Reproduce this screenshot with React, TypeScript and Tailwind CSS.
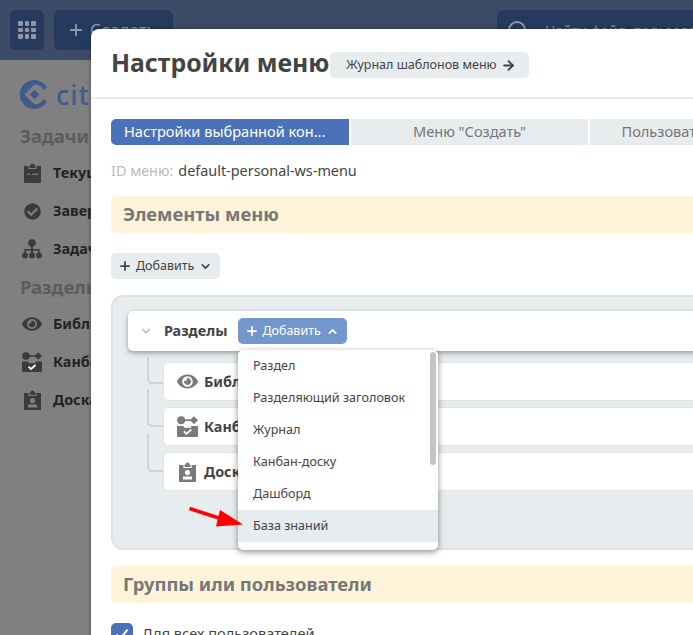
import { ArrowRight, ChevronDown, ChevronUp, Plus } from 'lucide-react';
import { FaCheckCircle, FaEye } from 'react-icons/fa';

type IconProps = { className?: string };

function KanbanIcon({ className }: IconProps) {
  return (
    <svg viewBox="0 0 20 20" className={className} fill="currentColor">
      <circle cx="4" cy="4" r="3.8" />
      <path d="M12.4 4 L16.2 0.2 L20 4 L16.2 7.8 Z" />
      <rect x="6" y="3.2" width="8" height="1.6" />
      <path d="M0 9.5 H6.5 V11.2 H13.5 V9.5 H20 V19 a1 1 0 0 1 -1 1 H1 a1 1 0 0 1 -1 -1 Z" />
      <path d="M6.6 14.6 L9 17 L13.6 13" fill="none" stroke="white" strokeWidth="1.7" />
    </svg>
  );
}

function TasksIcon({ className }: IconProps) {
  return (
    <svg viewBox="0 0 17 20" className={className} fill="currentColor">
      <path d="M5.5 2.5 H6.5 a2 2 0 0 1 4 0 H11.5 V5 H5.5 Z" />
      <path d="M1 3 H4.4 V6 H12.6 V3 H16 a1 1 0 0 1 1 1 V19 a1 1 0 0 1 -1 1 H1 a1 1 0 0 1 -1 -1 V4 a1 1 0 0 1 1 -1 Z" />
      <rect x="3" y="10.5" width="3" height="1.4" fill="#777" />
      <rect x="8" y="10.5" width="6" height="1.4" fill="#777" />
    </svg>
  );
}

function BoardIcon({ className }: IconProps) {
  return (
    <svg viewBox="0 0 17 20" className={className} fill="currentColor">
      <path d="M5.5 2.5 H6.5 a2 2 0 0 1 4 0 H11.5 V5 H5.5 Z" />
      <path
        fillRule="evenodd"
        d="M0 3 H4.4 V6 H12.6 V3 H17 V20 H0 Z M8.5 8 a2.6 2.6 0 1 0 0.01 0 Z M4 14.6 V17.4 H13 V14.6 Z"
      />
    </svg>
  );
}

function SitemapIcon({ className }: IconProps) {
  return (
    <svg viewBox="0 0 20 20" className={className} fill="currentColor">
      <circle cx="10" cy="4" r="3.8" />
      <circle cx="3" cy="16.6" r="3" />
      <circle cx="10" cy="16.6" r="3" />
      <circle cx="17" cy="16.6" r="3" />
      <path d="M9 6 H11 V10 H17.6 V15 H16 V11.6 H11 V15 H9 V11.6 H4 V15 H2.4 V10 H9 Z" />
    </svg>
  );
}

function Logo() {
  return (
    <svg viewBox="0 0 29 29" className="h-[29px] w-[29px] text-[#3f5a8c]" fill="currentColor">
      <path d="M27 7.5 A14.5 14.5 0 1 0 27 21.5 L23.4 19 A10 10 0 0 1 14.5 24.4 L4.6 14.5 L14.5 4.6 A10 10 0 0 1 23.4 10 Z" />
      <path d="M14.5 9.8 L19.2 14.5 L14.5 19.2 L9.8 14.5 Z" />
    </svg>
  );
}

function SideItem({ icon, label }: { icon: React.ReactNode; label: string }) {
  return (
    <div className="flex h-[38px] items-center">
      <div className="flex w-[32px] justify-center text-[#3b3b3b]">{icon}</div>
      <span className="ml-[5px] text-[14.4px] font-bold whitespace-nowrap text-[#232323]">{label}</span>
    </div>
  );
}

function TreeRow({ icon, label, first }: { icon: React.ReactNode; label: string; first?: boolean }) {
  return (
    <div className="relative flex h-[39px] items-center rounded-[5px] border border-[#dfe4e7] bg-white pl-[12px]">
      <div
        className={`absolute left-[-17px] w-[16px] rounded-bl-[5px] border-b-2 border-l-2 border-[#cfd3d3] ${
          first ? 'top-[-6px] h-[27px]' : 'top-[-19px] h-[38px]'
        }`}
      />
      <div className="flex w-[22px] justify-center text-[#7a7a7a]">{icon}</div>
      <span className="ml-[6px] text-[14.4px] font-bold whitespace-nowrap text-[#444]">{label}</span>
    </div>
  );
}

const menuItems = ['Раздел', 'Разделяющий заголовок', 'Журнал', 'Канбан-доску', 'Дашборд', 'База знаний'];

export default function App() {
  return (
    <div className="relative h-[635px] w-[693px] overflow-hidden bg-[#808080] font-['Noto_Sans','Open_Sans',sans-serif]">
      {/* Page behind the dialog */}
      <div className="flex h-[60px] items-center bg-[#3c4c68] pl-[10px]">
        <div className="flex h-[40px] w-[34px] shrink-0 items-center justify-center rounded-[6px] bg-[#263a5e]">
          <div className="grid grid-cols-3 gap-[2px]">
            {Array.from({ length: 9 }).map((_, i) => (
              <div key={i} className="h-[4.5px] w-[4.5px] rounded-[1px] bg-[#8f97a6]" />
            ))}
          </div>
        </div>
        <div className="ml-[10px] flex h-[40px] w-[119px] shrink-0 items-center rounded-[6px] bg-[#263a5e] pl-[13px] text-[#8f97a6]">
          <Plus size={18} strokeWidth={2.5} />
          <span className="ml-[5px] text-[17px]">Создать</span>
        </div>
        <div className="ml-[324px] flex h-[40px] w-[220px] shrink-0 items-center rounded-tl-[6px] rounded-bl-[6px] bg-[#263a5e] pl-[11px] text-[#8f97a6]">
          <div className="h-[18px] w-[18px] shrink-0 rounded-full border-2 border-[#8f97a6]" />
          <span className="ml-[19px] text-[14px] whitespace-nowrap">Найти файл, пользователя</span>
        </div>
      </div>
      <div className="pt-[19px] pl-[20px]">
        <div className="flex h-[30px] items-center">
          <Logo />
          <span className="ml-[7px] text-[27px] leading-none font-medium tracking-[1px] text-[#3f5a8c]">citeck</span>
        </div>
        <div className="mt-[14px] text-[18.5px] leading-[26px] font-bold text-[#5c5c5c]">Задачи</div>
        <div className="mt-[5px] -ml-[4px]">
          <SideItem icon={<TasksIcon className="h-[20px] w-[17px]" />} label="Текущие задачи" />
          <SideItem icon={<FaCheckCircle size={17} />} label="Завершенные" />
          <SideItem icon={<SitemapIcon className="h-[20px] w-[20px]" />} label="Задачи подчиненных" />
        </div>
        <div className="mt-[6px] text-[18.5px] leading-[26px] font-bold text-[#5c5c5c]">Разделы</div>
        <div className="mt-[5px] -ml-[4px]">
          <SideItem icon={<FaEye size={20} />} label="Библиотека" />
          <SideItem icon={<KanbanIcon className="h-[20px] w-[20px]" />} label="Канбан" />
          <SideItem icon={<BoardIcon className="h-[20px] w-[17px]" />} label="Доска" />
        </div>
      </div>

      {/* Dialog */}
      <div className="absolute top-[29px] left-[91px] h-[640px] w-[640px] rounded-tl-[8px] bg-white shadow-[0_0_4px_rgba(0,0,0,0.4)]">
        <div className="flex h-[70px] items-center border-b-2 border-[#e7ecef] pl-[20px]">
          <h1 className="text-[24.8px] font-bold whitespace-nowrap text-[#444]">Настройки меню</h1>
          <button className="mt-[4px] ml-[1px] flex h-[26px] w-[199px] shrink-0 items-center rounded-[5px] bg-[#e7ecef] pl-[16px] text-[12.5px] text-[#444]">
            Журнал шаблонов меню
            <ArrowRight size={15} strokeWidth={3} className="ml-[4px]" />
          </button>
        </div>

        <div className="pl-[20px]">
          <div className="mt-[20px] flex h-[26px] gap-[2px] text-[14.6px] whitespace-nowrap">
            <div className="flex w-[238px] shrink-0 items-center rounded-l-[5px] bg-[#4b72b8] pl-[13px] text-white">
              Настройки выбранной кон...
            </div>
            <div className="flex w-[237px] shrink-0 items-center justify-center bg-[#e7ecef] text-[#777]">
              Меню "Создать"
            </div>
            <div className="flex w-[237px] shrink-0 items-center justify-center bg-[#e7ecef] text-[#777]">
              Пользовательское меню
            </div>
          </div>

          <div className="mt-[14px] flex h-[24px] items-center text-[14.4px]">
            <span className="text-[#bbb]">ID меню:</span>
            <span className="ml-[5px] text-[#444]">default-personal-ws-menu</span>
          </div>

          <div className="mt-[13px] flex h-[37px] w-[620px] items-center rounded-l-[6px] bg-[#fff4d9] pb-[2px] pl-[12px] text-[18.4px] font-bold text-[#777]">
            Элементы меню
          </div>

          <button className="mt-[20px] flex h-[26px] w-[109px] items-center rounded-[5px] bg-[#e7ecef] pl-[7px] text-[12.5px] text-[#444]">
            <Plus size={14} strokeWidth={3} />
            <span className="ml-[4px]">Добавить</span>
            <ChevronDown size={13} strokeWidth={3} className="ml-[5px]" />
          </button>

          <div className="relative mt-[16px] h-[255px] w-[620px] rounded-l-[12px] border-2 border-r-0 border-[#dde2e5] bg-[#e7ecef] pt-[14px] pl-[15px]">
            <div className="flex h-[40px] items-center rounded-[5px] bg-white pl-[11px] shadow-[0_2px_5px_rgba(0,0,0,0.35)]">
              <ChevronDown size={14} strokeWidth={2.5} className="text-[#bbb]" />
              <span className="ml-[11px] text-[14.4px] font-bold text-[#444]">Разделы</span>
              <button className="ml-[11px] flex h-[26px] w-[109px] items-center rounded-[5px] bg-[#7396cd] pl-[7px] text-[12.5px] text-white">
                <Plus size={14} strokeWidth={3} />
                <span className="ml-[3px]">Добавить</span>
                <ChevronUp size={13} strokeWidth={3} className="ml-[5px]" />
              </button>
            </div>
            <div className="mt-[11px] ml-[35px] flex flex-col gap-[6px]">
              <TreeRow first icon={<FaEye size={21} />} label="Библиотека" />
              <TreeRow icon={<KanbanIcon className="h-[21px] w-[21px]" />} label="Канбан" />
              <TreeRow icon={<BoardIcon className="h-[20px] w-[17px]" />} label="Доска" />
            </div>

            {/* Open menu */}
            <div className="absolute top-[53px] left-[125px] h-[200px] w-[200px] rounded-[5px] bg-white shadow-[0_2px_6px_rgba(0,0,0,0.45)]">
              {menuItems.map((item, i) => (
                <div
                  key={item}
                  className={`flex h-[32px] items-center pl-[15px] text-[12.6px] text-[#444] ${i === 5 ? 'bg-[#e7ecef]' : ''}`}
                >
                  {item}
                </div>
              ))}
              <div className="absolute top-[2px] right-[2px] h-[113px] w-[6px] rounded-full bg-[#c4c4c4]" />
            </div>

            {/* Annotation arrow */}
            <svg className="absolute top-[204px] left-[76px] h-[30px] w-[60px]" viewBox="0 0 60 30">
              <path d="M0.5 7.5 L33 18" stroke="#ff0000" strokeWidth="3.5" />
              <path d="M54 23.5 L27 25.5 L31 9 Z" fill="#ff0000" />
            </svg>
          </div>

          <div className="mt-[16px] flex h-[37px] w-[620px] items-center rounded-l-[6px] bg-[#fff4d9] pb-[2px] pl-[12px] text-[18.4px] font-bold text-[#777]">
            Группы или пользователи
          </div>

          <div className="mt-[20px] flex items-start">
            <div className="flex h-[22px] w-[22px] items-center justify-center rounded-[5px] bg-[#4b72b8]">
              <svg viewBox="0 0 16 16" className="h-[16px] w-[16px]" fill="none" stroke="white" strokeWidth="2">
                <path d="M2.5 8.5 L6.5 12.5 L13.5 3.5" />
              </svg>
            </div>
            <span className="ml-[9px] text-[14.6px] leading-[20px] text-[#444]">Для всех пользователей</span>
          </div>
        </div>
      </div>
    </div>
  );
}
